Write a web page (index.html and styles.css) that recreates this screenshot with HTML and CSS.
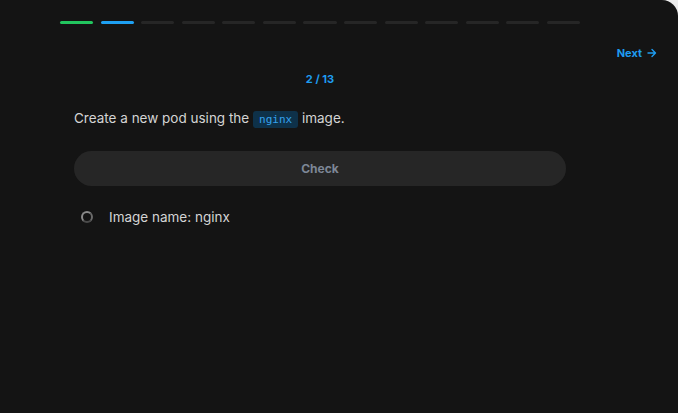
FILE: index.html
```html
<!DOCTYPE html>
<html>
<head>
<meta charset="utf-8">
<link rel="stylesheet" href="styles.css">
</head>
<body>
<div class="panel">
  <div class="progress">
    <span class="seg done"></span>
    <span class="seg current"></span>
    <span class="seg"></span>
    <span class="seg"></span>
    <span class="seg"></span>
    <span class="seg"></span>
    <span class="seg"></span>
    <span class="seg"></span>
    <span class="seg"></span>
    <span class="seg"></span>
    <span class="seg"></span>
    <span class="seg"></span>
    <span class="seg"></span>
  </div>
  <div class="nav">
    <a class="next">Next
      <svg class="arrow" width="10" height="10" viewBox="0 0 10 10"><path d="M1 5h7.5M5 1.5 8.5 5 5 8.5" fill="none" stroke="currentColor" stroke-width="1.4" stroke-linecap="round" stroke-linejoin="round"/></svg>
    </a>
  </div>
  <div class="main">
    <div class="counter">2 / 13</div>
    <p class="task">Create a new pod using the <code class="code">nginx</code> image.</p>
    <button class="check">Check</button>
    <ul class="checks">
      <li class="item"><span class="spinner"></span><span>Image name: nginx</span></li>
    </ul>
  </div>
</div>
</body>
</html>
```

FILE: styles.css
```css
html, body {
  margin: 0;
  padding: 0;
  background: #ececec;
}
body {
  font-family: Inter, "Noto Sans", sans-serif;
}
.panel {
  width: 678px;
  height: 413px;
  background: #141414;
  border-top-right-radius: 16px;
  box-sizing: border-box;
  padding-top: 21px;
}
.progress {
  width: 520px;
  margin-left: 60px;
  display: flex;
  gap: 7.5px;
}
.seg {
  flex: 1;
  height: 3px;
  border-radius: 2px;
  background: #262626;
}
.seg.done { background: #22c55e; }
.seg.current { background: #1ea0f2; }
.nav {
  display: flex;
  justify-content: flex-end;
  padding-right: 21px;
  margin-top: 21px;
  height: 16px;
}
.next {
  display: flex;
  align-items: center;
  gap: 5px;
  color: #1e9cf0;
  font-size: 11px;
  font-weight: 700;
  line-height: 16px;
}
.arrow { display: block; }
.main {
  width: 492px;
  margin-left: 74px;
}
.counter {
  margin-top: 10px;
  text-align: center;
  color: #1e9cf0;
  font-size: 11px;
  font-weight: 700;
  line-height: 16px;
}
.task {
  margin: 20px 0 0;
  color: #d4d4d4;
  font-size: 13.5px;
  line-height: 22px;
}
.code {
  font-family: "DejaVu Sans Mono", monospace;
  font-size: 11px;
  color: #35a3ef;
  background: #0e3149;
  border-radius: 3px;
  padding: 2px 6px;
}
.check {
  display: block;
  width: 100%;
  height: 35px;
  margin-top: 20px;
  border: none;
  border-radius: 18px;
  background: #262626;
  color: #7d8796;
  font-family: inherit;
  font-size: 12px;
  font-weight: 700;
}
.checks {
  list-style: none;
  margin: 20px 0 0;
  padding: 0;
}
.item {
  display: flex;
  align-items: center;
  gap: 16px;
  padding-left: 7px;
  color: #d4d4d4;
  font-size: 13.5px;
  line-height: 22px;
}
.spinner {
  width: 8px;
  height: 8px;
  border-radius: 50%;
  border: 2px solid #6b6b6b;
  border-top-color: #8a8a8a;
  border-left-color: #8a8a8a;
  border-bottom-color: #4a4a4a;
}
```
